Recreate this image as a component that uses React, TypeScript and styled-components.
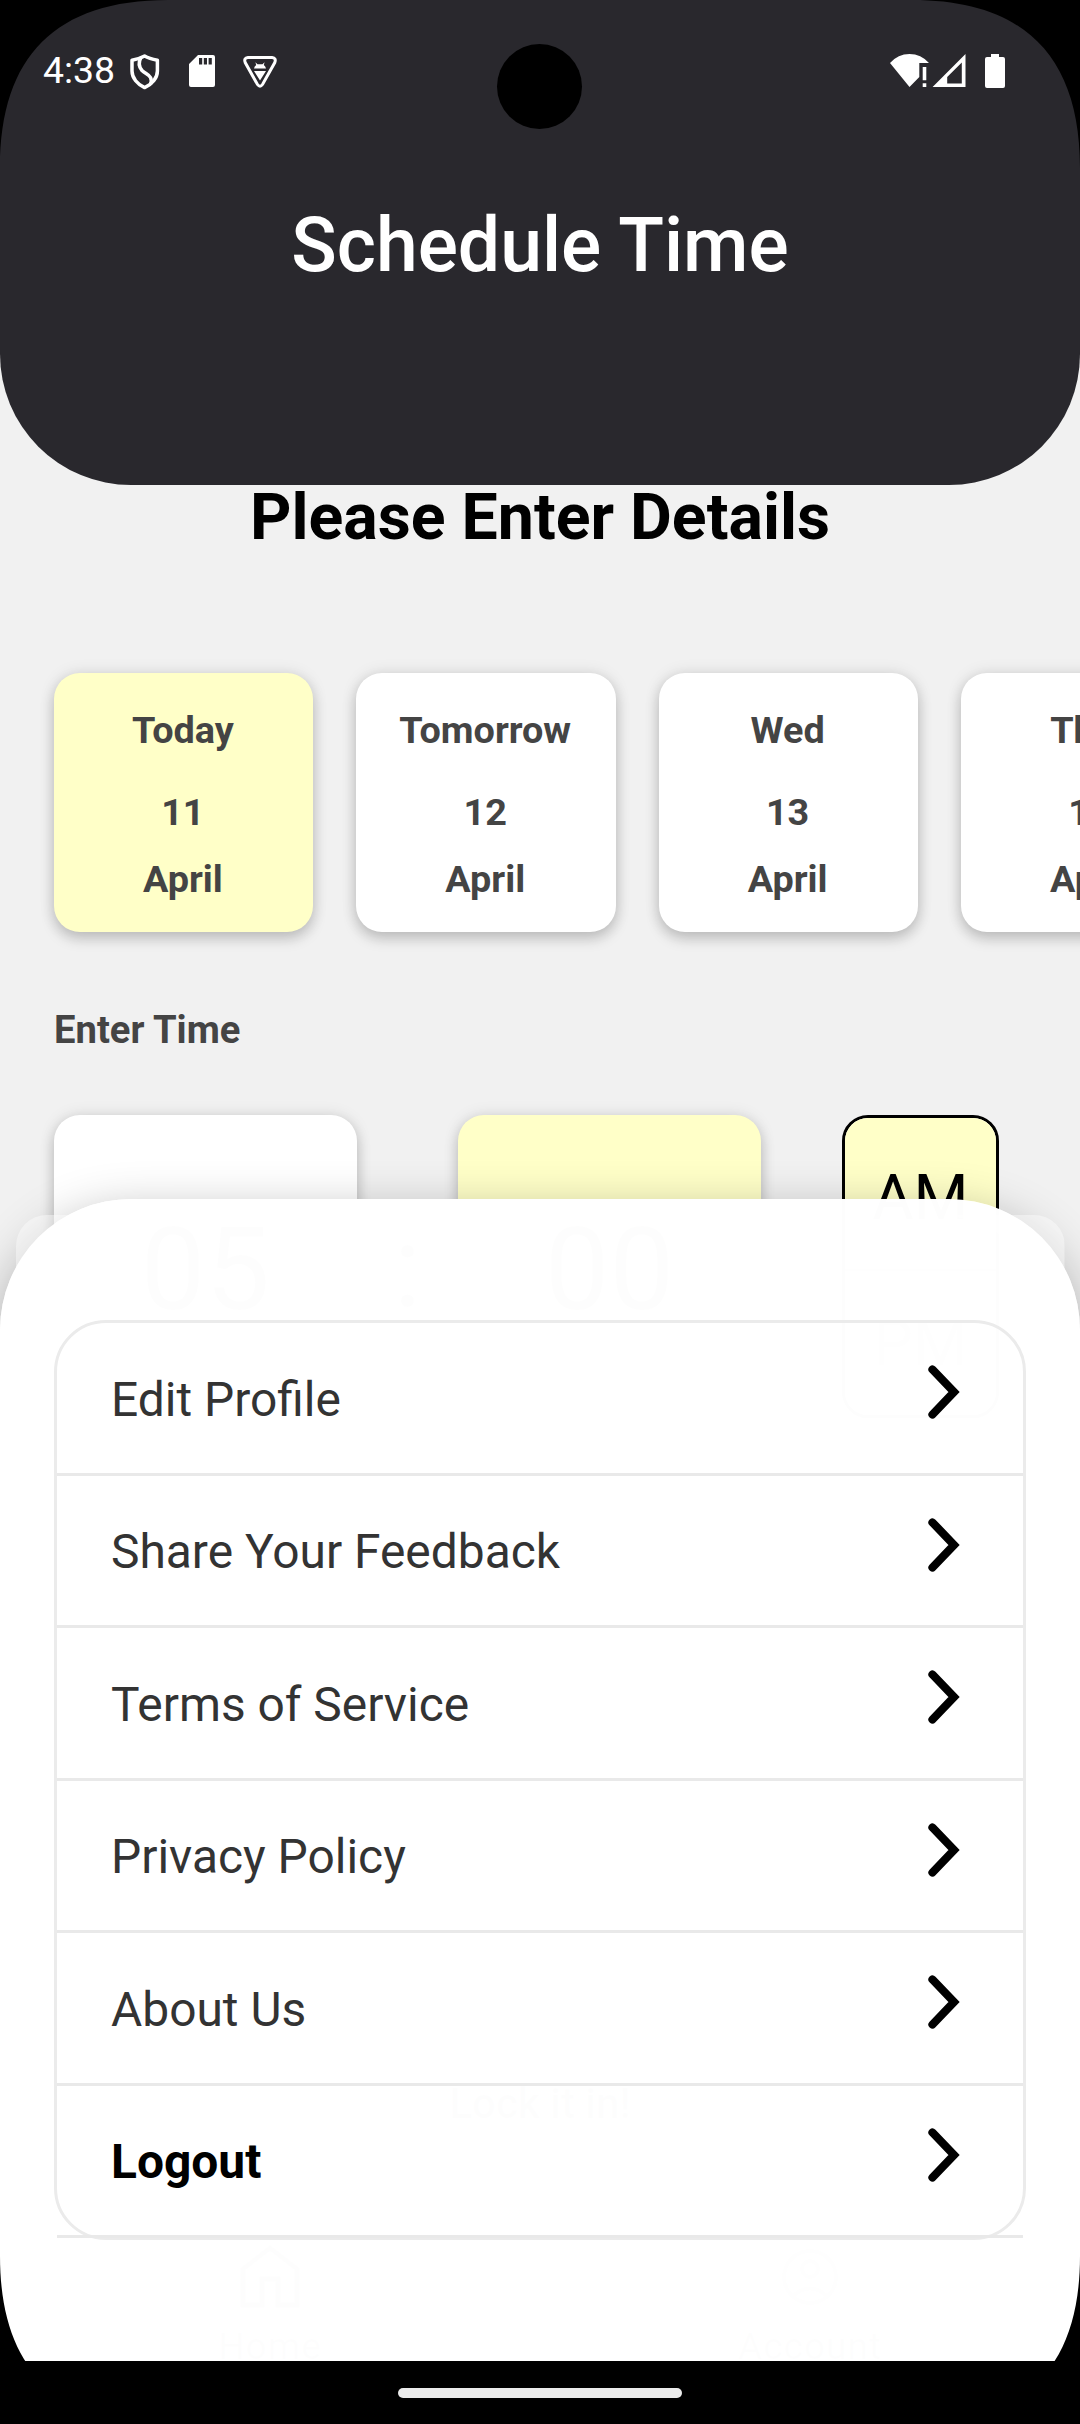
import React from "react";
import styled, { createGlobalStyle, css } from "styled-components";

const GlobalStyle = createGlobalStyle`
  * { box-sizing: border-box; }
  body { margin: 0; background: #000; }
`;

const Screen = styled.div`
  position: relative;
  width: 1080px;
  height: 2424px;
  overflow: hidden;
  display: flex;
  flex-direction: column;
  background: #f1f1f1;
  font-family: Roboto, "Liberation Sans", sans-serif;
`;

const Header = styled.header`
  flex: none;
  height: 485px;
  background: #29282d;
  border-radius: 0 0 131px 131px;
  color: #fff;
`;

const StatusBar = styled.div`
  height: 140px;
  padding: 53px 74px 0 43px;
  display: flex;
  align-items: flex-start;
  justify-content: space-between;
`;

const StatusGroup = styled.div`
  display: flex;
  align-items: flex-start;
`;

const Clock = styled.span`
  width: 86px;
  font-size: 37.4px;
  line-height: 34px;
`;

const StatusIcon = styled.svg<{ $gap?: number }>`
  display: block;
  flex: none;
  margin-left: ${(p) => p.$gap ?? 0}px;
`;

const Title = styled.h1`
  margin: 62px 0 0;
  font-size: 75.1px;
  line-height: 86px;
  font-weight: 500;
  text-align: center;
`;

const Camera = styled.div`
  position: absolute;
  left: 497px;
  top: 44px;
  width: 85px;
  height: 85px;
  border-radius: 50%;
  background: #000;
`;

const Body = styled.main`
  flex: none;
  display: flex;
  flex-direction: column;
`;

const Heading = styled.h2`
  margin: 0;
  font-size: 64.4px;
  line-height: 64px;
  font-weight: 700;
  text-align: center;
  color: #000;
`;

const DateRow = styled.div`
  display: flex;
  gap: 43.2px;
  padding: 0 54px;
  margin-top: 123.6px;
`;

const elevated = css`
  box-shadow: 0 7px 14px rgba(0, 0, 0, 0.18), 0 0 16px rgba(0, 0, 0, 0.1);
`;

const DateCard = styled.div<{ $selected?: boolean }>`
  flex: none;
  width: 259.2px;
  height: 259.4px;
  padding: 35.7px 1.5px 0 0;
  display: flex;
  flex-direction: column;
  align-items: center;
  border-radius: 26px;
  background: ${(p) => (p.$selected ? "#ffffc8" : "#fff")};
  ${elevated}
`;

const DateText = styled.span<{ $gap?: number }>`
  margin-top: ${(p) => p.$gap ?? 0}px;
  font-size: 37.8px;
  line-height: 44px;
  font-weight: 700;
  color: #444;
`;

const SectionLabel = styled.h3`
  margin: 76px 54px 0;
  font-size: 38.2px;
  line-height: 44px;
  font-weight: 700;
  color: #444;
`;

const TimeRow = styled.div`
  display: flex;
  align-items: center;
  padding-left: 54px;
  margin-top: 63px;
`;

const TimeBox = styled.div<{ $selected?: boolean }>`
  width: 303px;
  height: 303px;
  padding-top: 7px;
  display: flex;
  align-items: center;
  justify-content: center;
  border-radius: 26px;
  background: ${(p) => (p.$selected ? "#ffffc8" : "#fff")};
  font-size: 115px;
  color: #444;
  ${elevated}
`;

const Colon = styled.div`
  width: 101px;
  text-align: center;
  font-size: 115px;
  color: #444;
`;

const Meridiem = styled.div`
  width: 157px;
  height: 303px;
  margin-left: 81px;
  display: flex;
  flex-direction: column;
  overflow: hidden;
  border: 3px solid #000;
  border-radius: 26px;
  background: #fff;
`;

const MeridiemOption = styled.div<{ $selected?: boolean }>`
  flex: 1;
  display: flex;
  align-items: center;
  justify-content: center;
  background: ${(p) => (p.$selected ? "#ffffc8" : "#fff")};
  border-bottom: ${(p) => (p.$selected ? "2px solid #777" : "none")};
  padding-top: ${(p) => (p.$selected ? "8px" : "0")};
  font-size: 63px;
  color: ${(p) => (p.$selected ? "#000" : "#777")};
`;

const Submit = styled.div`
  margin-top: 656px;
  font-size: 42px;
  line-height: 60px;
  font-weight: 500;
  text-align: center;
  color: #555;
`;

const TabBar = styled.div`
  margin-top: auto;
  padding-bottom: 55px;
  display: flex;
  background: #fff;
`;

const Tab = styled.div`
  flex: 1;
  display: flex;
  flex-direction: column;
  align-items: center;
  gap: 16px;
  font-size: 37px;
  line-height: 44px;
  letter-spacing: 1px;
  color: #555;
`;

const Sheet = styled.section`
  position: absolute;
  left: 0;
  top: 1199px;
  width: 1080px;
  height: 1162px;
  padding: 121px 54px 0;
  border-radius: 131px 131px 0 0;
  background: rgba(255, 255, 255, 0.993);
  box-shadow: 0 14px 50px rgba(0, 0, 0, 0.3);
`;

const Backdrop = styled.div`
  position: absolute;
  left: 15.5px;
  top: 1214.5px;
  width: 1049px;
  height: 300px;
  border-radius: 31px;
  background: rgba(255, 255, 255, 0.42);
  clip-path: path("M0 0H1049V120Q1030 20 930 0H115Q20 20 0 120Z");
`;

const Menu = styled.nav`
  height: 920px;
  border: 3px solid #ebebeb;
  border-radius: 52px;
`;

const MenuRow = styled.div`
  height: 152.5px;
  display: flex;
  align-items: center;
  justify-content: space-between;
  padding: 0 63px 0 54px;
  border-bottom: 3px solid #e9e9e9;
`;

const MenuLabel = styled.span<{ $strong?: boolean }>`
  padding-top: 4px;
  font-size: 47.9px;
  line-height: 56px;
  font-weight: ${(p) => (p.$strong ? 700 : 400)};
  color: ${(p) => (p.$strong ? "#000" : "#333")};
`;

const Chevron = styled.svg`
  display: block;
  margin-bottom: 11px;
`;

const NavBar = styled.div`
  position: absolute;
  left: 0;
  bottom: 0;
  width: 1080px;
  height: 63px;
  padding-top: 27px;
  display: flex;
  justify-content: center;
  background: #000;
`;

const NavPill = styled.div`
  width: 284px;
  height: 10px;
  border-radius: 5px;
  background: #ebebeb;
`;

const ScreenCorner = styled.svg<{ $right?: boolean; $bottom?: boolean }>`
  position: absolute;
  ${(p) => (p.$right ? "right: 0;" : "left: 0;")}
  ${(p) => (p.$bottom ? "bottom: 0;" : "top: 0;")}
  transform: scale(${(p) => (p.$right ? -1 : 1)}, ${(p) => (p.$bottom ? -1 : 1)});
`;

const Corner = (props: { right?: boolean; bottom?: boolean }) => (
  <ScreenCorner width="168" height="168" $right={props.right} $bottom={props.bottom}>
    <path d="M0 0H168C56 0 0 56 0 168Z" fill="#000" />
  </ScreenCorner>
);

const dates = [
  { day: "Today", date: "11", month: "April" },
  { day: "Tomorrow", date: "12", month: "April" },
  { day: "Wed", date: "13", month: "April" },
  { day: "Thur", date: "14", month: "April" },
];

const menuItems = [
  "Edit Profile",
  "Share Your Feedback",
  "Terms of Service",
  "Privacy Policy",
  "About Us",
  "Logout",
];

export default function App() {
  return (
    <>
      <GlobalStyle />
      <Screen>
        <Header>
          <StatusBar>
            <StatusGroup>
              <Clock>4:38</Clock>
              <StatusIcon width="32" height="37" viewBox="0 0 32 37" fill="none" stroke="#fff" strokeWidth="3.5" strokeLinejoin="round">
                <path d="M15.6 3C12 5 8 6.300 3 7.200V18C3 25 8.500 31.500 15.600 34.600C23 31.500 28.400 25 28.400 18V7.200C23.500 6.300 19 5 15.600 3Z" />
                <path d="M12 4.500C9.500 9 10 14 13 17.500C16 20.500 20 21.500 21.500 24.500C22.500 26.500 22.500 28.500 21.500 31" />
              </StatusIcon>
              <StatusIcon $gap={28} width="26" height="35" viewBox="0 0 26 35" fill="#fff">
                <path fillRule="evenodd" d="M9 2H24Q26 2 26 4V32Q26 34 24 34H2Q0 34 0 32V11ZM10 5V11.500H13.200V5ZM14.800 5V11.500H18V5ZM19.600 5V11.500H22.800V5Z" />
              </StatusIcon>
              <StatusIcon $gap={28} width="34" height="37" viewBox="0 0 34 37">
                <path d="M5 4.500H29Q33.500 5 31.800 9.500L19.500 31.500Q17 35 14.500 31.500L2.200 9.500Q.5 5 5 4.500Z" fill="none" stroke="#fff" strokeWidth="3" />
                <path d="M11 15.500Q11.500 13 13.200 12L12.400 9.200L14.500 11.300H19.500L21.600 9.200L20.800 12Q22.500 13 23 15.500ZM11 18H23L17 27.500Z" fill="#fff" />
              </StatusIcon>
            </StatusGroup>
            <StatusGroup>
              <StatusIcon width="40" height="36" viewBox="0 0 40 36" fill="#fff">
                <path d="M0 10Q8 1 19.500 1Q31 1 39 10H29.300V24L19.500 34Z" />
                <path d="M32.700 14H36.300V27.300H32.700ZM32.700 30.300H36.300V34H32.700Z" />
              </StatusIcon>
              <StatusIcon $gap={2} width="34" height="36" viewBox="0 0 34 36" fill="#fff">
                <path fillRule="evenodd" d="M0.600 34H33.500V1ZM15.200 30.500V24L29.800 9.500V30.500Z" />
              </StatusIcon>
              <StatusIcon $gap={18} width="22" height="36" viewBox="0 0 22 36" fill="#fff">
                <path d="M7 1H15V4H19Q21 4 21 6V33Q21 35 19 35H3Q1 35 1 33V6Q1 4 3 4H7Z" />
              </StatusIcon>
            </StatusGroup>
          </StatusBar>
          <Title>Schedule Time</Title>
        </Header>
        <Camera />

        <Body>
          <Heading>Please Enter Details</Heading>
          <DateRow>
            {dates.map((d, i) => (
              <DateCard key={d.date} $selected={i === 0}>
                <DateText>{d.day}</DateText>
                <DateText $gap={38}>{d.date}</DateText>
                <DateText $gap={22.6}>{d.month}</DateText>
              </DateCard>
            ))}
          </DateRow>
          <SectionLabel>Enter Time</SectionLabel>
          <TimeRow>
            <TimeBox>05</TimeBox>
            <Colon>:</Colon>
            <TimeBox $selected>00</TimeBox>
            <Meridiem>
              <MeridiemOption $selected>AM</MeridiemOption>
              <MeridiemOption>PM</MeridiemOption>
            </Meridiem>
          </TimeRow>
          <Submit>Lock it in!</Submit>
        </Body>
        <TabBar>
          <Tab>
            <svg width="60" height="64" viewBox="0 0 60 64" fill="none" stroke="#555" strokeWidth="5">
              <path d="M3 24L30 3L57 24V60H38V34H22V60H3Z" />
            </svg>
            Home
          </Tab>
          <Tab>
            <svg width="60" height="64" viewBox="0 0 60 64" fill="none" stroke="#777" strokeWidth="4">
              <circle cx="30" cy="32" r="26" />
              <circle cx="30" cy="24" r="8" />
              <path d="M13 51Q30 36 47 51" />
            </svg>
            Account
          </Tab>
        </TabBar>

        <Sheet>
          <Menu>
            {menuItems.map((item) => (
              <MenuRow key={item}>
                <MenuLabel $strong={item === "Logout"}>{item}</MenuLabel>
                <Chevron width="34" height="56" viewBox="0 0 34 56" fill="none" stroke="#000" strokeWidth="8.2" strokeLinecap="round">
                  <path d="M6.500 5.500L28 28L6.500 50.500" />
                </Chevron>
              </MenuRow>
            ))}
          </Menu>
        </Sheet>
        <Backdrop />

        <NavBar>
          <NavPill />
        </NavBar>
        <Corner />
        <Corner right />
        <Corner bottom />
        <Corner right bottom />
      </Screen>
    </>
  );
}
